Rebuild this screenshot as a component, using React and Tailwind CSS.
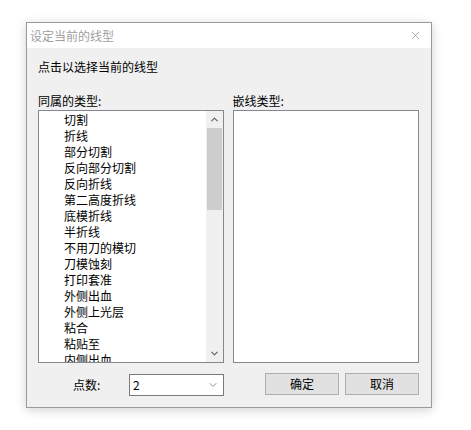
import { X, ChevronUp, ChevronDown } from 'lucide-react';

const items = [
  '切割', '折线', '部分切割', '反向部分切割', '反向折线', '第二高度折线', '底模折线', '半折线',
  '不用刀的模切', '刀模蚀刻', '打印套准', '外侧出血', '外侧上光层', '粘合', '粘贴至', '内侧出血',
];

const font = { fontFamily: '"Noto Sans CJK SC", "Liberation Sans", sans-serif' };

function ListBox({ children, className }) {
  return (
    <div className={`h-[253px] border border-[#828790] bg-white overflow-hidden ${className}`}>
      {children}
    </div>
  );
}

export default function App() {
  return (
    <div className="w-[471px] h-[430px] bg-white pt-[22px] pl-[26px] text-[12px] text-black" style={font}>
      <div className="w-[406px] h-[386px] border border-[#9a9a9a] bg-[#f0f0f0] shadow-[0_2px_10px_rgba(0,0,0,0.18)] flex flex-col">
        {/* title bar */}
        <div className="h-[25px] bg-white flex items-center justify-between pl-[3px] pr-[9px]">
          <span className="text-[#a0a0a0] leading-none">设定当前的线型</span>
          <X size={13} strokeWidth={1} className="text-[#707070]" />
        </div>

        <div className="flex-1 flex flex-col pl-[11px] pr-[12px]">
          <div className="mt-[11px] h-[16px] leading-[16px]">点击以选择当前的线型</div>

          <div className="mt-[18px] flex gap-[9px]">
            <div className="w-[186px] flex flex-col">
              <div className="h-[16px] leading-[16px] mb-[1px]">同属的类型:</div>
              <ListBox className="flex">
                <div className="flex-1 pl-[25px] pt-[1px]">
                  {items.map((t) => (
                    <div key={t} className="h-[16px] leading-[16px] whitespace-nowrap">{t}</div>
                  ))}
                </div>
                <div className="w-[17px] bg-[#f0f0f0] flex flex-col">
                  <div className="h-[17px] flex items-center justify-center">
                    <ChevronUp size={11} strokeWidth={2.5} className="text-[#606060]" />
                  </div>
                  <div className="h-[82px] mx-[1px] bg-[#cdcdcd]" />
                  <div className="flex-1" />
                  <div className="h-[17px] flex items-center justify-center">
                    <ChevronDown size={11} strokeWidth={2.5} className="text-[#606060]" />
                  </div>
                </div>
              </ListBox>
            </div>
            <div className="w-[187px] flex flex-col">
              <div className="h-[16px] leading-[16px] mb-[1px]">嵌线类型:</div>
              <ListBox />
            </div>
          </div>

          <div className="mt-[10px] flex items-start">
            <div className="w-[91px] pl-[35px] mt-[4px] leading-[16px]">点数:</div>
            <div className="mt-[1px] w-[95px] h-[22px] border border-[#7a7a7a] bg-white flex items-center justify-between pl-[3px] pr-[4px]">
              <span className="leading-none">2</span>
              <ChevronDown size={12} strokeWidth={1.3} className="text-[#505050]" />
            </div>
            <div className="ml-auto flex gap-[6px]">
              <button className="w-[74px] h-[22px] border border-[#adadad] bg-[#e1e1e1] leading-none">确定</button>
              <button className="w-[74px] h-[22px] border border-[#adadad] bg-[#e1e1e1] leading-none">取消</button>
            </div>
          </div>
        </div>
      </div>
    </div>
  );
}
